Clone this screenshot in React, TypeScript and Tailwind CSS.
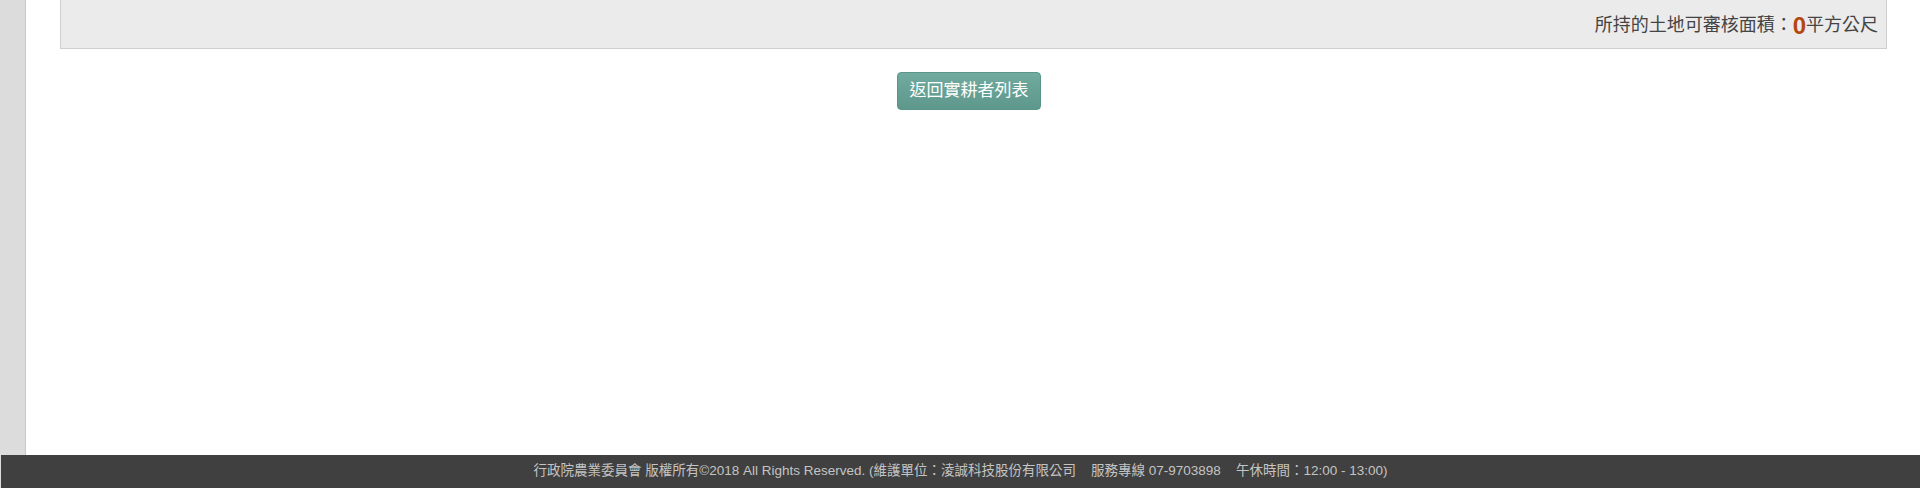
export default function App() {
  return (
    <div className="flex h-[488px] w-[1920px] flex-col overflow-hidden bg-white font-['Liberation_Sans','Noto_Sans_CJK_TC',sans-serif]">
      <div className="flex min-h-0 flex-1">
        <div className="w-[26px] shrink-0 border-r border-[#c8c8c8] bg-[#dcdcdc]" />
        <div className="flex-1 pl-[34px] pr-[33px]">
          <div className="flex h-[49px] items-center justify-end border border-t-0 border-[#cfcfcf] bg-[#ebebeb] pr-[8px] pt-[3px] text-[18px] text-[#444]">
            <span>所持的土地可審核面積：</span>
            <span className="text-[24px] font-bold leading-none text-[#b3470f]">0</span>
            <span>平方公尺</span>
          </div>
          <div className="mt-[23px] flex justify-center pr-[9px]">
            <button className="h-[38px] w-[144px] rounded-[4px] border border-[#5b9589] bg-gradient-to-b from-[#71ab9f] to-[#5e978b] text-[17px] text-white">
              返回實耕者列表
            </button>
          </div>
        </div>
      </div>
      <div className="bg-[#dcdcdc] pl-[1px]">
        <div className="flex h-[33px] items-center justify-center whitespace-pre bg-[#404040] text-[13.5px] text-[#c4c4c4]">
          行政院農業委員會 版權所有©2018 All Rights Reserved. (維護單位：淩誠科技股份有限公司{"    "}服務專線 07-9703898{"    "}午休時間：12:00 - 13:00)
        </div>
      </div>
    </div>
  );
}
